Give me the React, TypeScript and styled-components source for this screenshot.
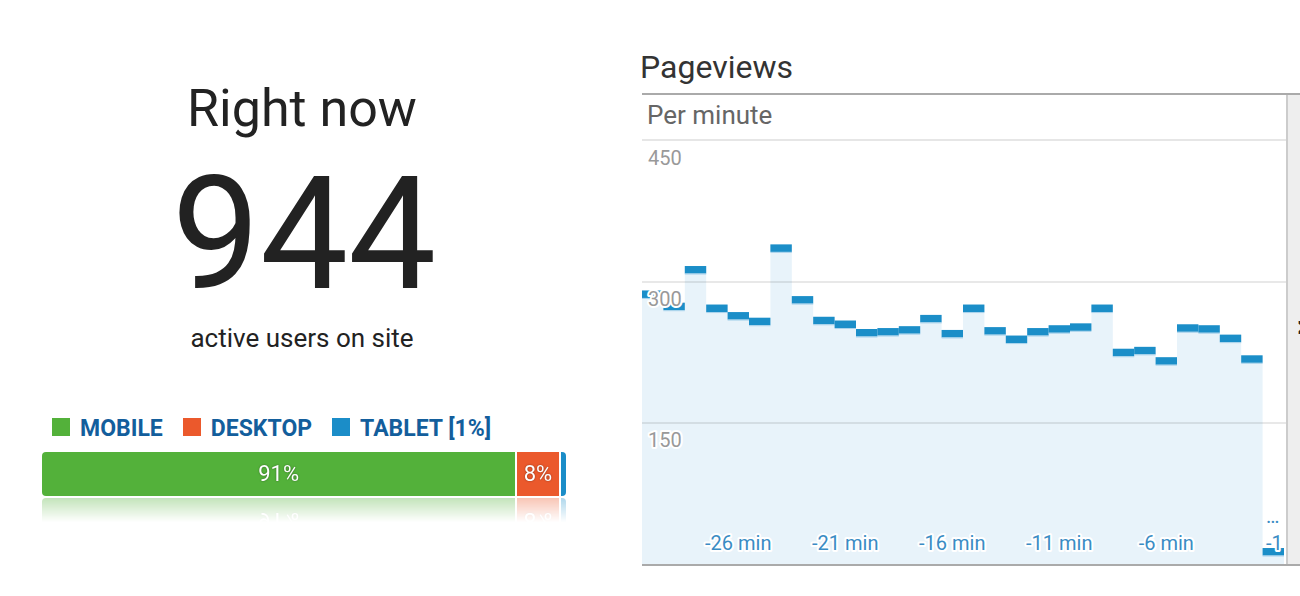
import React from "react";
import styled, { createGlobalStyle } from "styled-components";

const GlobalStyle = createGlobalStyle`
  html, body {
    margin: 0;
    padding: 0;
    background: #fff;
  }
  body {
    font-family: Roboto, "Liberation Sans", Arial, sans-serif;
  }
  * {
    box-sizing: border-box;
  }
`;

const devices = [
  { name: "MOBILE", color: "#53b13a", share: 91 },
  { name: "DESKTOP", color: "#eb592c", share: 8 },
  { name: "TABLET [1%]", color: "#1b8dc8", share: 1 },
];

// pageviews per minute, oldest first (-30 .. -1 min)
const perMinute = [
  291, 278, 317, 276, 268, 262, 340, 285, 263, 259,
  250, 251, 253, 265, 249, 276, 252, 243, 251, 254,
  256, 276, 229, 231, 220, 255, 254, 244, 222, 17,
];

const PLOT_W = 644;
const PLOT_H = 423;
const STEP = 21.4;
const PX_PER_VIEW = 0.94;
const yOf = (v: number) => PLOT_H - v * PX_PER_VIEW;

function App() {
  return (
    <>
      <GlobalStyle />
      <Page>
        <Summary.Panel />
        <Traffic.Panel />
      </Page>
    </>
  );
}
export default App;

const Page = styled.main`
  display: flex;
  width: 1300px;
  height: 596px;
  overflow: hidden;
`;

namespace Summary {
  export function Panel() {
    return (
      <Frame>
        <Heading>Right now</Heading>
        <Count>944</Count>
        <Caption>active users on site</Caption>
        <Legend>
          {devices.map((d) => (
            <LegendItem key={d.name}>
              <Swatch $color={d.color} />
              <Label>{d.name}</Label>
            </LegendItem>
          ))}
        </Legend>
        <Bar>
          {devices.map((d) => (
            <Segment key={d.name} $color={d.color} $grow={d.share}>
              {d.share > 5 ? `${d.share}%` : ""}
            </Segment>
          ))}
        </Bar>
      </Frame>
    );
  }

  const Frame = styled.section`
    display: flex;
    flex-direction: column;
    align-items: center;
    width: 524px;
    margin-left: 42px;
    padding-top: 83px;
    color: #222;
  `;
  const Heading = styled.h2`
    margin: 0 4px 0 0;
    font: 400 52px/52px Roboto, sans-serif;
  `;
  const Count = styled.div`
    margin-top: 21px;
    font: 400 157px/157px Roboto, sans-serif;
  `;
  const Caption = styled.div`
    margin: 12px 4px 0 0;
    font: 400 26px/26px Roboto, sans-serif;
  `;
  const Legend = styled.ul`
    align-self: stretch;
    display: flex;
    gap: 20px;
    margin: 67px 0 0;
    padding: 0 0 0 10px;
    list-style: none;
  `;
  const LegendItem = styled.li`
    display: flex;
    align-items: center;
    gap: 10px;
    height: 18px;
    font: 700 23px/18px Roboto, sans-serif;
    color: #135e9c;
  `;
  const Label = styled.span`
    display: inline-block;
    margin-top: 3px;
  `;
  const Swatch = styled.span<{ $color: string }>`
    width: 18px;
    height: 18px;
    background: ${(p) => p.$color};
  `;
  const Bar = styled.div`
    align-self: stretch;
    display: flex;
    gap: 2px;
    height: 44px;
    margin-top: 16px;
    border-radius: 4px;
    overflow: hidden;
    -webkit-box-reflect: below 2px
      linear-gradient(transparent 45%, rgba(255, 255, 255, 0.35));
  `;
  const Segment = styled.div<{ $color: string; $grow: number }>`
    flex: ${(p) => p.$grow} 0 0;
    display: flex;
    align-items: center;
    justify-content: center;
    background: ${(p) => p.$color};
    color: #fff;
    font: 400 22px/1 Roboto, sans-serif;
    text-shadow: 0 0 2px rgba(0, 0, 0, 0.45);
  `;
}

namespace Traffic {
  export function Panel() {
    return (
      <Frame>
        <Title>Pageviews</Title>
        <ChartFrame>
          <ChartMain>
            <ChartHeader>Per minute</ChartHeader>
            <StepChart />
          </ChartMain>
          <SideStrip>Σ</SideStrip>
        </ChartFrame>
      </Frame>
    );
  }

  function StepChart() {
    let area = `M0 ${PLOT_H}`;
    perMinute.forEach((v, i) => {
      area += ` L${i * STEP} ${yOf(v)} L${(i + 1) * STEP} ${yOf(v)}`;
    });
    area += ` L${perMinute.length * STEP} ${PLOT_H} Z`;

    return (
      <Plot viewBox={`0 0 ${PLOT_W} ${PLOT_H}`}>
        <path d={area} fill="#e8f3fa" />
        <rect x={0} y={140} width={PLOT_W} height={2} fill="rgba(0,0,0,0.09)" />
        <rect x={0} y={281} width={PLOT_W} height={2} fill="rgba(0,0,0,0.09)" />
        {perMinute.map((v, i) => (
          <g key={i}>
            <rect x={i * STEP} y={yOf(v)} width={STEP} height={7.5} fill="#1b8ec8" />
            <rect x={i * STEP} y={yOf(v) + 7.5} width={STEP} height={1} fill="#a8d2eb" />
          </g>
        ))}
        <AxisText x={6} y={24}>450</AxisText>
        <AxisText x={6} y={165}>300</AxisText>
        <AxisText x={6} y={306}>150</AxisText>
        {[4, 9, 14, 19, 24].map((i) => (
          <TimeText key={i} x={(i + 0.5) * STEP} y={409} textAnchor="middle">
            {`-${30 - i} min`}
          </TimeText>
        ))}
        <TimeText x={624} y={382}>…</TimeText>
        <TimeText x={624} y={409}>-1</TimeText>
      </Plot>
    );
  }

  const Frame = styled.section`
    display: flex;
    flex-direction: column;
    width: 658px;
    margin-left: 76px;
    padding-top: 51px;
  `;
  const Title = styled.h2`
    margin: 0 0 10px -2px;
    font: 400 32px/32px Roboto, sans-serif;
    color: #333;
  `;
  const ChartFrame = styled.div`
    display: flex;
    height: 473px;
    border-top: 2px solid #aaa;
    border-bottom: 2px solid #aaa;
  `;
  const ChartMain = styled.div`
    display: flex;
    flex-direction: column;
    width: ${PLOT_W}px;
  `;
  const ChartHeader = styled.div`
    height: 46px;
    padding: 7px 0 0 5px;
    border-bottom: 2px solid #e6e6e6;
    font: 400 26px/26px Roboto, sans-serif;
    color: #666;
  `;
  const Plot = styled.svg`
    display: block;
    width: ${PLOT_W}px;
    height: ${PLOT_H}px;
    overflow: hidden;
  `;
  const AxisText = styled.text`
    font: 400 20px Roboto, sans-serif;
    fill: #999;
    stroke: #fff;
    stroke-width: 4px;
    stroke-linejoin: round;
    paint-order: stroke;
  `;
  const TimeText = styled(AxisText)`
    fill: #3a8cc4;
  `;
  const SideStrip = styled.div`
    flex: 1;
    overflow: hidden;
    padding: 224px 0 0 9px;
    border-left: 2px solid #ccc;
    background: #eee;
    font: 700 18px/18px "DejaVu Sans", sans-serif;
    color: #222;
    white-space: nowrap;
  `;
}
